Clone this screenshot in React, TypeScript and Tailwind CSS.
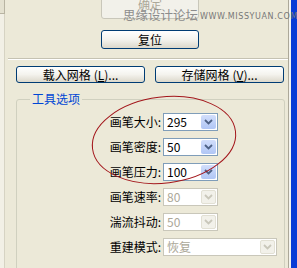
const cjk = { fontFamily: '"Noto Sans CJK SC", "Liberation Sans", sans-serif' };

function Chevron({ color }: { color: string }) {
  return (
    <svg width="9" height="6" viewBox="0 0 9 6">
      <path d="M1 1 L4.5 4.5 L8 1" fill="none" stroke={color} strokeWidth="1.8" />
    </svg>
  );
}

function Combo({ value, disabled, width }: { value: string; disabled?: boolean; width: string }) {
  return (
    <div
      className={`flex h-[18px] items-center border bg-white ${width} ${
        disabled ? "border-[#c9c7ba]" : "border-[#7f9db9]"
      }`}
    >
      <span
        className={`flex-1 pl-[3px] text-[12px] leading-none ${disabled ? "text-[#aca899]" : "text-black"}`}
        style={cjk}
      >
        {value}
      </span>
      <div
        className={`mr-[1px] flex h-[14px] w-[15px] items-center justify-center rounded-[2px] ${
          disabled ? "bg-[#f2f1ea] border border-[#e2e0d4]" : "bg-gradient-to-b from-[#d2defb] to-[#b0c6f5]"
        }`}
      >
        <Chevron color={disabled ? "#c9c7ba" : "#4d6185"} />
      </div>
    </div>
  );
}

function Row({ label, value, disabled, wide }: { label: string; value: string; disabled?: boolean; wide?: boolean }) {
  return (
    <div className="flex items-center gap-[2px] pl-[88px]">
      <span className="w-[56px] text-right text-[12px] leading-none text-black" style={cjk}>
        {label}
      </span>
      <Combo value={value} disabled={disabled} width={wide ? "w-[114px]" : "w-[55px]"} />
    </div>
  );
}

const btn =
  "flex items-center justify-center rounded-[3px] border border-[#003c74] bg-gradient-to-b from-white via-[#f4f3ee] to-[#dcd8cb] text-[12px] leading-none text-black";

export default function App() {
  return (
    <div className="relative flex h-[268px] w-[297px] overflow-hidden bg-[#ece9d8]">
      <div className="flex w-[5px] flex-col">
        <div className="h-[14px] border-b border-r border-[#b8b4a2] bg-[#e4e1d0]" />
        <div className="flex-1 border-r border-[#d6d3c3] bg-[#f2f0e6]" />
      </div>

      <div className="flex flex-1 flex-col">
        <div className="flex flex-col items-start pl-[96px]">
          <div
            className="mt-[-11px] flex h-[30px] w-[98px] items-center justify-center rounded-[3px] border border-[#c9c7ba] bg-[#f2f1ea] text-[12px] leading-none text-[#aca899]"
            style={cjk}
          >
            确定
          </div>
          <div className={`${btn} mt-[11px] h-[19px] w-[98px]`} style={cjk}>
            复位
          </div>
        </div>

        <div className="ml-[3px] mt-[9px] border-t border-b border-t-[#c5c2b2] border-b-white" />

        <div className="mt-[6px] flex gap-[10px] pl-[11px]">
          <div className={`${btn} h-[17px] w-[129px]`} style={cjk}>
            载入网格<span className="ml-[3px]">(<u>L</u>)...</span>
          </div>
          <div className={`${btn} h-[17px] w-[129px]`} style={cjk}>
            存储网格<span className="ml-[3px]">(<u>V</u>)...</span>
          </div>
        </div>

        <fieldset className="ml-[11px] mt-[9px] w-[269px] rounded-[3px] border border-[#d0d0bf] pb-[20px]">
          <legend className="ml-[13px] px-[2px] text-[12px] leading-[14px] text-[#0046d5]" style={cjk}>
            工具选项
          </legend>
          <div className="flex flex-col gap-[7px] pt-[7px]">
            <Row label="画笔大小:" value="295" />
            <Row label="画笔密度:" value="50" />
            <Row label="画笔压力:" value="100" />
            <Row label="画笔速率:" value="80" disabled />
            <Row label="湍流抖动:" value="50" disabled />
            <Row label="重建模式:" value="恢复" disabled wide />
          </div>
        </fieldset>
      </div>

      <div className="w-[1px] bg-[#aca899]" />
      <div className="w-[2px] bg-[#f4f3ee]" />
      <div className="w-[6px] bg-[#0a3bd6]" />

      <div className="pointer-events-none absolute left-[123px] top-[9px] flex items-end gap-[2px] whitespace-nowrap">
        <span className="text-[12.5px] leading-none text-[#8c8c8c]" style={cjk}>
          思缘设计论坛
        </span>
        <span
          className="mb-[1px] text-[8px] leading-none tracking-[0.6px] text-[#777]"
          style={{ fontFamily: '"DejaVu Sans", sans-serif' }}
        >
          WWW.MISSYUAN.COM
        </span>
      </div>

      <svg className="pointer-events-none absolute left-0 top-0" width="297" height="268" viewBox="0 0 297 268">
        <ellipse
          cx="164"
          cy="140"
          rx="72"
          ry="43"
          transform="rotate(-7 164 140)"
          fill="none"
          stroke="#a3161b"
          strokeWidth="1"
        />
      </svg>
    </div>
  );
}
